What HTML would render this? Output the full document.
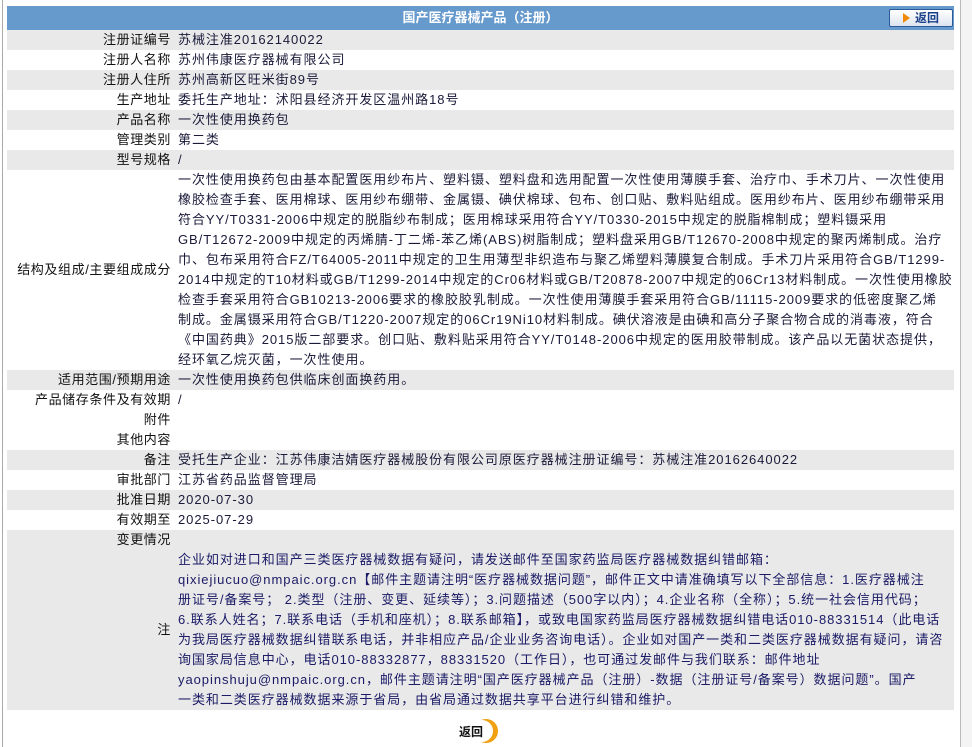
<!DOCTYPE html>
<html><head><meta charset="utf-8"><style>
html,body{margin:0;padding:0;background:#fff;width:972px;height:747px;overflow:hidden}
body{font-family:"Liberation Sans","Noto Sans CJK SC",sans-serif;font-size:13px;color:#111;position:relative}
.lb{position:absolute;left:2px;top:0;width:1px;height:747px;background:#aaa}
.rb{position:absolute;left:960px;top:0;width:12px;height:747px;background:#f4f4f4;border-left:1px solid #bbb}
table{position:absolute;left:7px;top:6px;width:947px;border-collapse:collapse}
td{padding:0;line-height:20px;height:20px;vertical-align:middle;white-space:nowrap}
td.l{width:164px;text-align:right;padding-right:7px;letter-spacing:0.6px}
td.v{padding-left:0px;color:#1a1a3a;letter-spacing:0.95px}
tr.g td{background:#e9e9e9}
tr.h td{background:#6699cc;height:24px;color:#fff;font-weight:bold;text-align:center;position:relative}
.btn{position:absolute;right:1px;top:3px;width:62px;height:16px;border:1px solid #2a5a9a;border-radius:2px;background:linear-gradient(#fff,#dde4ee);color:#1a3f8a;font-size:12px;line-height:16px;text-align:center}
.btn b{display:inline-block;width:0;height:0;border-left:7px solid #f08a00;border-top:5px solid transparent;border-bottom:5px solid transparent;margin-right:5px;vertical-align:-1px}
.ret{position:absolute;left:456px;top:717px;width:48px;height:28px}
</style></head><body>
<div class="lb"></div><div class="rb"></div>
<table>
<tr class="h"><td colspan="2">国产医疗器械产品（注册）<span class="btn"><b></b>返回</span></td></tr>
<tr class="g"><td class="l">注册证编号</td><td class="v">苏械注准20162140022</td></tr>
<tr><td class="l">注册人名称</td><td class="v">苏州伟康医疗器械有限公司</td></tr>
<tr class="g"><td class="l">注册人住所</td><td class="v">苏州高新区旺米街89号</td></tr>
<tr><td class="l">生产地址</td><td class="v">委托生产地址：沭阳县经济开发区温州路18号</td></tr>
<tr class="g"><td class="l">产品名称</td><td class="v">一次性使用换药包</td></tr>
<tr><td class="l">管理类别</td><td class="v">第二类</td></tr>
<tr class="g"><td class="l">型号规格</td><td class="v">/</td></tr>
<tr><td class="l">结构及组成/主要组成成分</td><td class="v">一次性使用换药包由基本配置医用纱布片、塑料镊、塑料盘和选用配置一次性使用薄膜手套、治疗巾、手术刀片、一次性使用<br>橡胶检查手套、医用棉球、医用纱布绷带、金属镊、碘伏棉球、包布、创口贴、敷料贴组成。医用纱布片、医用纱布绷带采用<br>符合YY/T0331-2006中规定的脱脂纱布制成；医用棉球采用符合YY/T0330-2015中规定的脱脂棉制成；塑料镊采用<br>GB/T12672-2009中规定的丙烯腈-丁二烯-苯乙烯(ABS)树脂制成；塑料盘采用GB/T12670-2008中规定的聚丙烯制成。治疗<br>巾、包布采用符合FZ/T64005-2011中规定的卫生用薄型非织造布与聚乙烯塑料薄膜复合制成。手术刀片采用符合GB/T1299-<br>2014中规定的T10材料或GB/T1299-2014中规定的Cr06材料或GB/T20878-2007中规定的06Cr13材料制成。一次性使用橡胶<br>检查手套采用符合GB10213-2006要求的橡胶胶乳制成。一次性使用薄膜手套采用符合GB/11115-2009要求的低密度聚乙烯<br>制成。金属镊采用符合GB/T1220-2007规定的06Cr19Ni10材料制成。碘伏溶液是由碘和高分子聚合物合成的消毒液，符合<br>《中国药典》2015版二部要求。创口贴、敷料贴采用符合YY/T0148-2006中规定的医用胶带制成。该产品以无菌状态提供，<br>经环氧乙烷灭菌，一次性使用。</td></tr>
<tr class="g"><td class="l">适用范围/预期用途</td><td class="v">一次性使用换药包供临床创面换药用。</td></tr>
<tr><td class="l">产品储存条件及有效期</td><td class="v">/</td></tr>
<tr><td class="l">附件</td><td class="v"></td></tr>
<tr><td class="l">其他内容</td><td class="v"></td></tr>
<tr class="g"><td class="l">备注</td><td class="v">受托生产企业：江苏伟康洁婧医疗器械股份有限公司原医疗器械注册证编号：苏械注准20162640022</td></tr>
<tr><td class="l">审批部门</td><td class="v">江苏省药品监督管理局</td></tr>
<tr class="g"><td class="l">批准日期</td><td class="v">2020-07-30</td></tr>
<tr><td class="l">有效期至</td><td class="v">2025-07-29</td></tr>
<tr class="g"><td class="l">变更情况</td><td class="v"></td></tr>
<tr class="g"><td class="l">注</td><td class="v" style="color:#1a1a66">企业如对进口和国产三类医疗器械数据有疑问，请发送邮件至国家药监局医疗器械数据纠错邮箱：<br>qixiejiucuo@nmpaic.org.cn【邮件主题请注明“医疗器械数据问题”，邮件正文中请准确填写以下全部信息：1.医疗器械注<br>册证号/备案号； 2.类型（注册、变更、延续等）；3.问题描述（500字以内）；4.企业名称（全称）；5.统一社会信用代码；<br>6.联系人姓名；7.联系电话（手机和座机）；8.联系邮箱】，或致电国家药监局医疗器械数据纠错电话010-88331514（此电话<br>为我局医疗器械数据纠错联系电话，并非相应产品/企业业务咨询电话）。企业如对国产一类和二类医疗器械数据有疑问，请咨<br>询国家局信息中心，电话010-88332877，88331520（工作日），也可通过发邮件与我们联系：邮件地址<br>yaopinshuju@nmpaic.org.cn，邮件主题请注明“国产医疗器械产品（注册）-数据（注册证号/备案号）数据问题”。国产<br>一类和二类医疗器械数据来源于省局，由省局通过数据共享平台进行纠错和维护。</td></tr>
</table>
<svg class="ret" viewBox="0 0 48 28"><circle cx="30" cy="14" r="12" fill="#f0a010"/><circle cx="26" cy="14" r="11" fill="#fff"/><text x="3" y="19" font-size="12" font-weight="bold" fill="#111" font-family="Noto Sans CJK SC,sans-serif">返回</text></svg>
</body></html>
